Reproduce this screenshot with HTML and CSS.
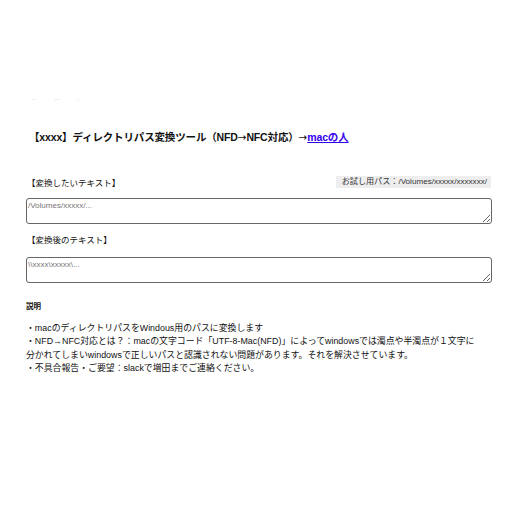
FILE: index.html
```html
<!DOCTYPE html>
<html lang="ja">
<head>
<meta charset="utf-8">
<link rel="stylesheet" href="styles.css">
</head>
<body>
<div class="page">
  <div class="nav"><span class="dot d1"></span><span class="dot d2"></span><span class="dot d3"></span></div>
  <h1 class="title">【xxxx】ディレクトリパス変換ツール（NFD<span class="arr">→</span>NFC対応）<span class="arr">→</span><a href="#" class="link">macの人</a></h1>
  <div class="row">
    <div class="label">【変換したいテキスト】</div>
    <div class="sample">お試し用パス：/Volumes/xxxxx/xxxxxxx/</div>
  </div>
  <textarea class="box" placeholder="/Volumes/xxxxx/..."></textarea>
  <div class="row row2">
    <div class="label">【変換後のテキスト】</div>
  </div>
  <textarea class="box box2" placeholder="\\xxxx\xxxxx\..."></textarea>
  <div class="head">説明</div>
  <div class="desc">
    <p>・macのディレクトリパスをWindous用のパスに変換します</p>
    <p>・NFD→NFC対応とは？：macの文字コード「UTF-8-Mac(NFD)」によってwindowsでは濁点や半濁点が１文字に分かれてしまいwindowsで正しいパスと認識されない問題があります。それを解決させています。</p>
    <p>・不具合報告・ご要望：slackで増田までご連絡ください。</p>
  </div>
</div>
</body>
</html>
```
FILE: styles.css
```css
html, body {
  margin: 0;
  padding: 0;
  background: #fff;
}
body {
  font-family: "Liberation Sans", "Noto Sans CJK JP", sans-serif;
  color: #111;
}
.page {
  width: 466px;
  padding: 0 0 0 26px;
}
.nav {
  height: 100px;
  display: flex;
  align-items: flex-end;
  gap: 18px;
  padding-left: 6px;
}
.dot {
  display: block;
  height: 1px;
  background: #eee;
}
.d1 { width: 4px; }
.d2 { width: 5px; }
.d3 { width: 2px; }
.arr {
  font-family: "DejaVu Sans", sans-serif;
  font-weight: normal;
}
.title {
  margin: 30px 0 0 3px;
  font-size: 10.5px;
  font-weight: bold;
  line-height: 14px;
  letter-spacing: -0.15px;
}
.link {
  color: #3300ee;
  text-decoration: underline;
}
.row {
  margin-top: 32px;
  display: flex;
  justify-content: space-between;
  align-items: center;
  height: 12px;
}
.row2 {
  margin-top: 9px;
}
.label {
  font-size: 8.5px;
  padding-left: 1px;
}
.sample {
  font-size: 8.1px;
  background: #eee;
  color: #333;
  padding: 1px 4px 1px 6px;
  line-height: 10px;
  margin-right: 1px;
}
.box {
  display: block;
  box-sizing: border-box;
  width: 466px;
  height: 26px;
  margin-top: 10px;
  border: 1.5px solid #666;
  border-radius: 3px;
  padding: 2px 1px;
  font-family: "Liberation Sans", "Noto Sans CJK JP", sans-serif;
  font-size: 8px;
  resize: vertical;
}
.box2 {
  margin-top: 12px;
}
.box::placeholder {
  color: #777;
}
.head {
  margin-top: 17px;
  font-size: 7.5px;
  font-weight: bold;
}
.desc {
  margin-top: 11px;
  width: 452px;
  font-size: 8.9px;
  line-height: 13.3px;
}
.desc p {
  margin: 0;
}
```
